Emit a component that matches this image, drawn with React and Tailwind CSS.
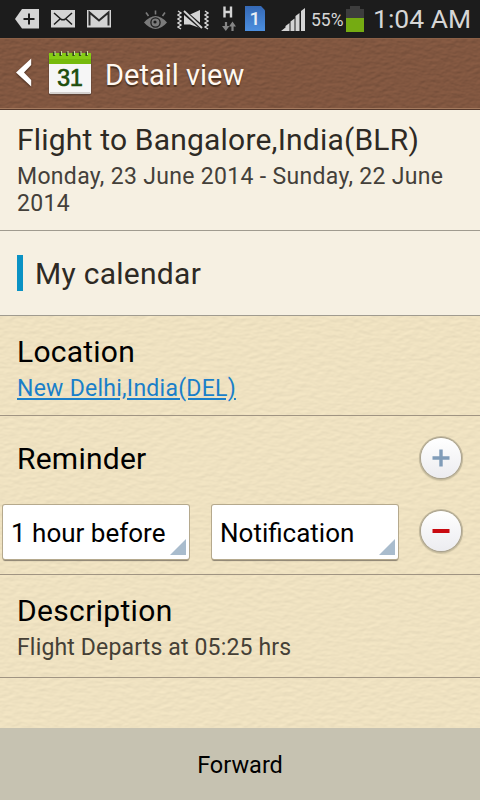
function StatusBar() {
  return (
    <div className="flex h-[38px] shrink-0 items-start bg-[#1c1c1c] pl-[15px] text-[#d6d6d6]">
      <svg className="h-[38px] w-6" viewBox="15 0 24 38">
        <path d="M22 9H39V28.500H22L15 19Z" fill="#d4d4d4" />
        <path d="M29 13.500V24.500M23.500 19H34.500" stroke="#1c1c1c" strokeWidth="2" />
      </svg>
      <svg className="ml-3 h-[38px] w-6" viewBox="51 0 24 38">
        <rect x="51" y="10" width="24" height="17.500" fill="#d4d4d4" />
        <path d="M54 13L60.500 18.800Q63 20.800 65.500 18.800L72 13M54 24.500L60 19M72 24.500L66 19" fill="none" stroke="#1c1c1c" strokeWidth="1.500" />
      </svg>
      <svg className="ml-3 h-[38px] w-6" viewBox="87 0 24 38">
        <rect x="87" y="10" width="24" height="17.500" fill="#d4d4d4" />
        <path d="M89.500 25.500V12.500L99 20.500L108.500 12.500V25.500" fill="none" stroke="#2a2a2a" strokeWidth="2" />
      </svg>
      <svg className="ml-[33px] h-[38px] w-6" viewBox="144 0 24 38">
        <path d="M144 22.500Q155.500 9.500 167 22.500Q155.500 35.500 144 22.500Z" fill="#7b7b7b" />
        <circle cx="155.500" cy="22.500" r="4.600" fill="none" stroke="#1c1c1c" strokeWidth="1.300" />
        <circle cx="155" cy="22" r="1.600" fill="#1c1c1c" />
        <path d="M155.500 10.500V14.500M146 12.500L148.500 16M165 12.500L162.500 16" stroke="#7b7b7b" strokeWidth="1.600" />
      </svg>
      <svg className="ml-[9px] h-[38px] w-8" viewBox="177 0 32 38">
        <path d="M184 14.500H190L200 10V28L190 24.500H184Z" fill="#d4d4d4" />
        <path d="M183.500 11.500L202.500 28" stroke="#1c1c1c" strokeWidth="4.600" />
        <path d="M184 11L202 28" stroke="#d4d4d4" strokeWidth="1.900" />
        <path d="M178 11L181 13L178 15L181 17L178 19L181 21L178 23L181 25L178 27L181 29M205 11L208 13L205 15L208 17L205 19L208 21L205 23L208 25L205 27L208 29" fill="none" stroke="#d4d4d4" strokeWidth="1.400" />
      </svg>
      <svg className="ml-[12px] h-[38px] w-4" viewBox="221 0 16 38">
        <path d="M224.500 6.500V17.500M231 6.500V17.500M224.500 12H231" stroke="#d4d4d4" strokeWidth="2.400" />
        <path d="M226 22V27M232.500 31V25" stroke="#858585" strokeWidth="2.200" />
        <path d="M222 26H229.500L225.800 31ZM229 26.500H236L232.500 21.500Z" fill="#858585" />
      </svg>
      <div className="ml-2 mt-1.5 h-[25px] w-5 bg-gradient-to-b from-[#3569b5] to-[#4c8fdf] text-center text-[19px] leading-[26px] font-medium text-[#e8eef5] [clip-path:polygon(0_0,80%_0,100%_17%,100%_100%,0_100%)]">
        1
      </div>
      <svg className="ml-4 h-[38px] w-[25px]" viewBox="281 0 25 38">
        <path d="M281 31L285.500 27.500V31ZM285.500 31V26L289.500 23V31ZM290.500 31V21.500L294.500 18.500V31ZM295.500 31V16L299.500 13V31ZM301 31V11L305 8V31Z" fill="#d4d4d4" />
      </svg>
      <span className="ml-[5px] mt-[9px] w-[35px] text-[17.500px] leading-[23px] whitespace-nowrap">55%</span>
      <svg className="h-[38px] w-[18px]" viewBox="346 0 18 38">
        <path d="M346 9H350V6H360V9H364V18H346Z" fill="#3d3d3d" />
        <rect x="346" y="18" width="18" height="14" fill="#75ab12" />
      </svg>
      <span className="ml-[9px] mt-[4px] text-[26.500px] leading-[30px] whitespace-nowrap">1:04 AM</span>
    </div>
  );
}

function Header() {
  return (
    <div className="relative isolate flex h-[72px] shrink-0 items-center border-t border-b border-t-[#8b6046] border-b-[#55382b] bg-[#7c543f] pl-4">
      <svg className="absolute inset-0 -z-10 h-full w-full">
        <filter id="leather" x="0" y="0" width="100%" height="100%" colorInterpolationFilters="sRGB">
          <feTurbulence type="fractalNoise" baseFrequency="0.16 0.28" numOctaves="3" seed="8" />
          <feDiffuseLighting surfaceScale="0.350" lightingColor="#95644a">
            <feDistantLight azimuth="250" elevation="60" />
          </feDiffuseLighting>
        </filter>
        <rect width="100%" height="100%" filter="url(#leather)" />
        <rect y="69" width="100%" height="1" fill="#a47a5e" />
      </svg>
      <svg className="mb-0.5 h-[30px] w-4 drop-shadow-[0_1px_1px_#40271a]" viewBox="16 58 16 30">
        <path d="M31.200 58.500V65L24 72.500L31.200 80V86.500L16 72.500Z" fill="#fff" />
      </svg>
      <svg className="ml-4 h-12 w-11" viewBox="48 50 44 48">
        <rect x="48.500" y="55" width="43" height="40.500" rx="2" fill="#5e4335" />
        <rect x="49" y="53" width="42" height="41" rx="1.500" fill="#f6f6f6" />
        <path d="M50 93H90" stroke="#c8c5c2" strokeWidth="1.500" />
        <path d="M49 53H91V64H49Z" fill="#85cc14" />
        <path d="M49 59H91V64H49Z" fill="#76ba0c" />
        <path d="M54 52V56M60.500 52V56M67 52V56M73.500 52V56M80 52V56M86.500 52V56" stroke="#34451e" strokeWidth="2.200" />
        <path d="M55 51V55M61.500 51V55M68 51V55M74.500 51V55M81 51V55M87.500 51V55" stroke="#c9dfa4" strokeWidth="1" />
        <text x="70" y="86" textAnchor="middle" className="fill-[#1d4d0c] stroke-[#1d4d0c] stroke-[0.7px] font-['Liberation_Sans',sans-serif] text-[23px]">31</text>
      </svg>
      <h1 className="ml-[13px] pt-px text-[29px] leading-[34px] text-[#fff8f0] [text-shadow:0_2px_1px_#49301f]">Detail view</h1>
    </div>
  );
}

function PaperTexture() {
  return (
    <svg className="absolute inset-0 -z-10 h-full w-full">
      <filter id="paper" x="0" y="0" width="100%" height="100%" colorInterpolationFilters="sRGB">
        <feTurbulence type="fractalNoise" baseFrequency="0.12 0.26" numOctaves="2" seed="3" />
        <feDiffuseLighting surfaceScale="0.200" lightingColor="#fef0cd">
          <feDistantLight azimuth="250" elevation="70" />
        </feDiffuseLighting>
      </filter>
      <rect width="100%" height="100%" filter="url(#paper)" />
    </svg>
  );
}

function Dropdown({ label }) {
  return (
    <button className="relative block h-[54px] w-[186px] rounded-[2px] bg-white pt-px pl-[8px] text-left text-[26px] leading-[54px] text-black shadow-[0_0_0_1px_#b5a98d,0_2px_1px_#8a8170]">
      {label}
      <span className="absolute right-[3px] bottom-[4px] h-4 w-4 bg-[#a9bccd] [clip-path:polygon(100%_0,100%_100%,0_100%)]"></span>
    </button>
  );
}

function RoundButton({ type }) {
  return (
    <button className="flex h-10 w-10 items-center justify-center rounded-full bg-gradient-to-b from-white to-[#ececf0] shadow-[0_0_0_1px_#aaa390,0_0_0_2px_#c3b99d,0_1px_1px_2px_#cfc4a4]">
      <svg className="h-5 w-5" viewBox="0 0 20 20">
        {type === "add" ? (
          <path d="M10 1.500V18.500M1.500 10H18.500" stroke="#809cb8" strokeWidth="3.400" />
        ) : (
          <path d="M1.500 10H18.500" stroke="#c90a10" strokeWidth="4" />
        )}
      </svg>
    </button>
  );
}

function App() {
  return (
    <div className="flex h-[800px] w-[480px] flex-col overflow-hidden font-['Roboto',sans-serif]">
      <StatusBar />
      <Header />

      <div className="relative isolate flex-1 bg-[#efe2bf]">
        <PaperTexture />
        <div className="h-[121px] border-b border-[#a09b8f] bg-[#f6f0e2] pt-[12px] pl-[17px]">
          <h2 className="text-[30px] leading-[36px] tracking-[0.2px] whitespace-nowrap text-[#2e2a24]">Flight to Bangalore,India(BLR)</h2>
          <p className="mt-[5px] text-[23px] leading-[27px] tracking-[0.32px] whitespace-nowrap text-[#44403a]">
            Monday, 23 June 2014 - Sunday, 22 June
            <br />
            2014
          </p>
        </div>
        <div className="flex h-[85px] items-center border-b border-[#a09b8f] bg-[#f6f0e2] pl-[17px]">
          <span className="h-9 w-1.5 bg-[#0a92c4]"></span>
          <span className="ml-3 pt-px text-[30px] leading-[36px] tracking-[0.28px] text-[#2e2a24]">My calendar</span>
        </div>
        <div className="h-[100px] border-b border-[#a09482] pt-[18px] pl-[17px]">
          <h3 className="text-[30px] leading-[36px] tracking-[0.24px] text-black">Location</h3>
          <a className="mt-[5px] block text-[23px] leading-[27px] tracking-[0.26px] text-[#1a7fc9] underline">New Delhi,India(DEL)</a>
        </div>
        <div className="h-[159px] border-b border-[#a09482]">
          <div className="flex h-[84px] items-center justify-between pr-[19px] pl-[17px]">
            <h3 className="pt-px text-[30px] leading-[36px] tracking-[0.24px] text-black">Reminder</h3>
            <RoundButton type="add" />
          </div>
          <div className="flex items-center pt-[5px] pr-[19px] pl-[3px]">
            <Dropdown label="1 hour before" />
            <div className="ml-[23px]">
              <Dropdown label="Notification" />
            </div>
            <div className="mb-[2px] ml-auto">
              <RoundButton type="remove" />
            </div>
          </div>
        </div>
        <div className="h-[103px] border-b border-[#a09482] pt-[18px] pl-[17px]">
          <h3 className="text-[30px] leading-[36px] tracking-[0.34px] text-black">Description</h3>
          <p className="mt-[5px] text-[23px] leading-[27px] tracking-[0.16px] text-[#454036]">Flight Departs at 05:25 hrs</p>
        </div>
      </div>

      <button className="h-[72px] shrink-0 bg-[#c6c2b1] pt-[3px] text-[23.500px] text-black">Forward</button>
    </div>
  );
}

export default App;
